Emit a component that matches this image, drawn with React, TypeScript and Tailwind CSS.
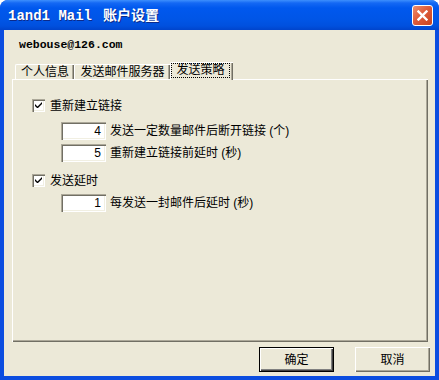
import React from "react";

const sunken =
  "shadow-[inset_1px_1px_0_#aca899,inset_2px_2px_0_#716f64,inset_-1px_-1px_0_#ffffff,inset_-2px_-2px_0_#f1efe2]";

function CheckBox() {
  return (
    <div className={`w-[13px] h-[13px] bg-white ${sunken} flex items-center justify-center shrink-0`}>
      <svg width="7" height="7" viewBox="0 0 7 7">
        <path d="M0 2 L0 4 L2 6 L3 6 L7 2 L7 0 L2.5 4.5 Z" fill="#000" />
      </svg>
    </div>
  );
}

function NumInput({ v }: { v: string }) {
  return (
    <div
      className={`w-[45px] h-[18px] bg-white ${sunken} flex items-center justify-end pr-[5px] text-[12px] leading-[14px] text-black shrink-0`}
    >
      {v}
    </div>
  );
}

function CloseBtn() {
  return (
    <div className="w-[21px] h-[21px] rounded-[3px] border border-white bg-[linear-gradient(135deg,#ec8f6f_0%,#de5c3b_45%,#c8431f_100%)] flex items-center justify-center">
      <svg width="11" height="11" viewBox="0 0 11 11">
        <path d="M1.5 1.5 L9.5 9.5 M9.5 1.5 L1.5 9.5" stroke="#fff" strokeWidth="2.4" strokeLinecap="square" />
      </svg>
    </div>
  );
}

export default function App() {
  const ui = "font-['Liberation_Sans','Noto_Sans_CJK_SC',sans-serif]";
  return (
    <div className="w-[439px] h-[380px] bg-white">
      <div className="w-full h-full flex flex-col rounded-t-[8px] overflow-hidden bg-[#0b4de0]">
        <div className="h-[30px] shrink-0 flex items-center justify-between pl-[8px] pr-[6px] bg-[linear-gradient(to_bottom,#3d8ffd_0px,#1468f4_3px,#0058ee_8px,#0055e6_20px,#0050de_26px,#0044cc_30px)]">
          <div className="flex items-baseline text-white font-bold [text-shadow:1px_1px_0_#0c2a8a]">
            <span className="whitespace-pre font-['Liberation_Mono',monospace] text-[14px]">1and1 Mail</span>
            <span className="ml-[11px] font-['Noto_Sans_CJK_SC',sans-serif] text-[14px]">账户设置</span>
          </div>
          <CloseBtn />
        </div>
        <div className={`flex-1 mx-[4px] mb-[4px] bg-[#ece9d8] flex flex-col pl-[8px] pr-[5px] text-black ${ui}`}>
          <div className="mt-[8px] ml-[7px] h-[14px] leading-[14px] font-['Liberation_Mono',monospace] font-bold text-[11.5px]">
            webouse@126.com
          </div>
          <div className="mt-[10px] h-[17px] flex items-end text-[12px]">
            <div className="ml-[3px] w-[59px] h-[15px] border-l border-t border-white rounded-tl-[2px] shadow-[inset_-1px_0_0_#716f64,inset_-2px_0_0_#aca899] flex items-center justify-center leading-[14px]">
              个人信息
            </div>
            <div className="w-[96px] h-[15px] border-l border-t border-white rounded-tl-[2px] shadow-[inset_-1px_0_0_#716f64,inset_-2px_0_0_#aca899] flex items-center justify-center leading-[14px]">
              发送邮件服务器
            </div>
            <div className="relative z-10 -mb-[1px] w-[63px] h-[18px] bg-[#ece9d8] border-l border-t border-white rounded-tl-[2px] shadow-[inset_-1px_0_0_#716f64,inset_-2px_0_0_#aca899] flex items-start justify-start">
              <div className="w-[59px] h-[15px] border border-dotted border-black flex items-center justify-center leading-[13px]">
                发送策略
              </div>
            </div>
          </div>
          <div className="mr-[2px] h-[263px] border-l border-t border-white shadow-[inset_-1px_-1px_0_#716f64,inset_-2px_-2px_0_#aca899] pl-[19px] pt-[19px] flex flex-col text-[12px]">
            <div className="flex items-center h-[13px]">
              <CheckBox />
              <span className="ml-[5px] leading-[14px]">重新建立链接</span>
            </div>
            <div className="mt-[10px] pl-[29px] flex items-center">
              <NumInput v="4" />
              <span className="ml-[4px] leading-[14px]">发送一定数量邮件后断开链接 (个)</span>
            </div>
            <div className="mt-[4px] pl-[29px] flex items-center">
              <NumInput v="5" />
              <span className="ml-[4px] leading-[14px]">重新建立链接前延时 (秒)</span>
            </div>
            <div className="mt-[12px] flex items-center h-[13px]">
              <CheckBox />
              <span className="ml-[5px] leading-[14px]">发送延时</span>
            </div>
            <div className="mt-[7px] pl-[29px] flex items-center">
              <NumInput v="1" />
              <span className="ml-[4px] leading-[14px]">每发送一封邮件后延时 (秒)</span>
            </div>
          </div>
          <div className="mt-[5px] h-[25px] flex justify-end gap-[21px] text-[12px]">
            <div className="w-[75px] h-[25px] border border-black bg-[#ece9d8] shadow-[inset_1px_1px_0_#ffffff,inset_-1px_-1px_0_#404040,inset_-2px_-2px_0_#808080] flex items-center justify-center leading-[14px]">
              确定
            </div>
            <div className="w-[75px] h-[25px] bg-[#ece9d8] shadow-[inset_1px_1px_0_#ffffff,inset_-1px_-1px_0_#716f64,inset_-2px_-2px_0_#aca899] flex items-center justify-center leading-[14px]">
              取消
            </div>
          </div>
        </div>
      </div>
    </div>
  );
}
